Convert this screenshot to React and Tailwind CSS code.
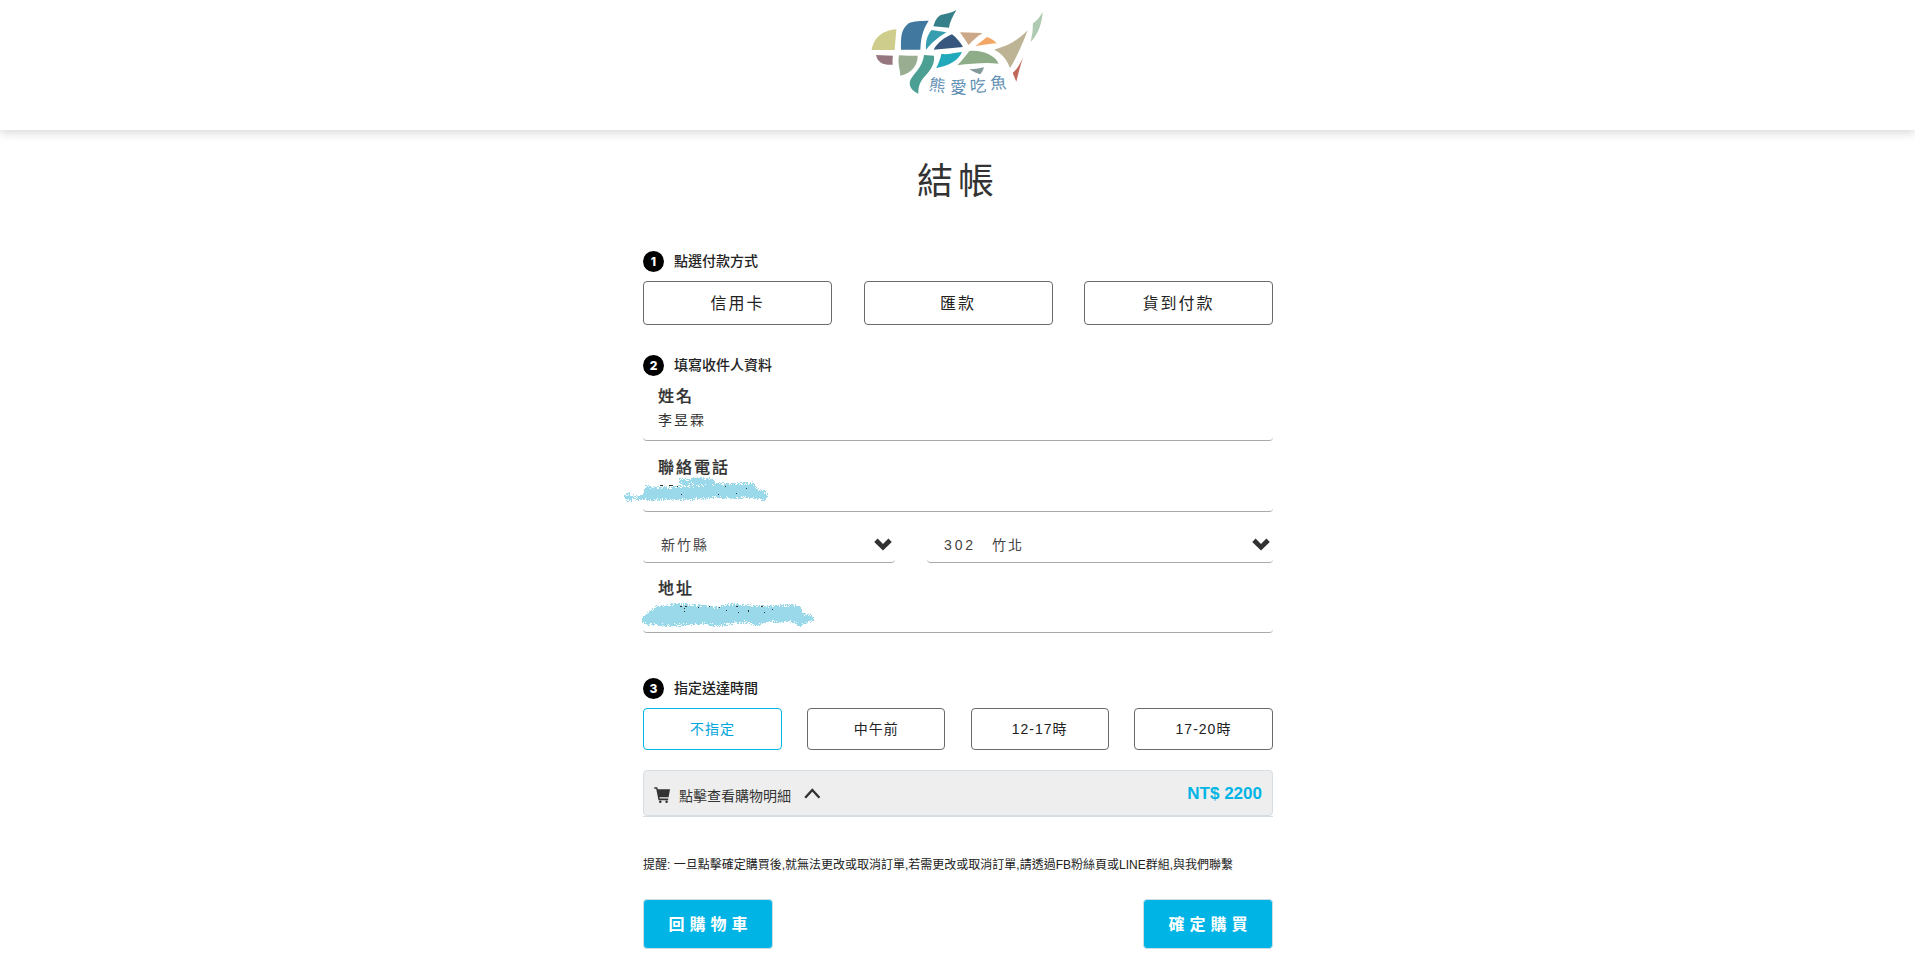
const SANS = "font-['Liberation_Sans','Noto_Sans_CJK_TC',sans-serif]";

const LOGO_SHAPES = [
  ['#cfcd8c', 'M65 150 C70 120 90 92 139 88 C138 108 135 130 134 150 Z'],
  ['#40789f', 'M153 149 C153 110 152 90 176 70 C190 62 215 63 236 62 C224 82 213 100 211 149 Z'],
  ['#35808a', 'M250 79 C256 62 260 52 272 45 C290 41 306 38 319 30 C308 50 299 66 297 83 Z'],
  ['#369eaf', 'M228 150 C226 125 232 104 245 90 L289 97 C268 110 244 128 228 150 Z'],
  ['#38577f', 'M251 149 C262 128 284 112 306 103 C320 114 331 127 339 141 Z'],
  ['#cba888', 'M330 97 L398 99 C380 110 368 122 356 135 Z'],
  ['#f3a665', 'M376 138 C388 129 400 120 411 111 C424 115 434 123 440 130 C418 132 396 135 376 138 Z'],
  ['#bdb496', 'M432 149 C472 138 506 120 533 91 C519 130 501 168 480 205 C472 180 456 160 432 149 Z'],
  ['#aecbb1', 'M578 36 C576 70 565 102 542 126 C545 108 548 97 548 88 C549 78 548 74 549 70 C562 62 571 48 578 36 Z'],
  ['#c06a59', 'M519 174 C511 196 505 220 499 245 L488 219 C502 208 510 190 519 174 Z'],
  ['#967780', 'M78 165 L129 167 C127 176 128 186 128 194 C104 196 83 190 78 165 Z'],
  ['#99ae91', 'M147 166 C166 168 184 167 203 167 C203 194 188 218 151 227 C150 206 142 190 147 166 Z'],
  ['#4ca093', 'M222 165 L252 167 C255 198 236 215 220 234 C206 252 205 266 205 281 C184 272 175 256 181 240 C192 219 218 202 222 165 Z'],
  ['#22a9bb', 'M274 162 C295 164 315 158 336 156 C325 181 297 198 259 204 C266 190 271 177 274 162 Z'],
  ['#8fac88', 'M322 196 C336 181 346 168 358 153 C395 149 435 165 446 191 C404 187 364 191 322 196 Z'],
  ['#83999a', 'M358 208 C373 208 387 205 402 202 C400 211 395 217 391 223 C379 220 369 215 358 208 Z'],
];

const LOGO_TEXT = [
  ['熊', 262, 256, 8],
  ['愛', 325, 261, 0],
  ['吃', 384, 258, -4],
  ['魚', 445, 249, -4],
];

function Logo() {
  return (
    <svg width="180" height="100" viewBox="54 0 540 300" className="block">
      {LOGO_SHAPES.map(([fill, d]) => (
        <path key={d} fill={fill} d={d} />
      ))}
      {LOGO_TEXT.map(([ch, x, y, r]) => (
        <text
          key={ch}
          x={x}
          y={y + 17}
          fontSize="49"
          textAnchor="middle"
          fill="#5f8fb3"
          transform={`rotate(${r} ${x} ${y})`}
          className="font-['Noto_Sans_CJK_TC',sans-serif]"
        >
          {ch}
        </text>
      ))}
    </svg>
  );
}

// Spray-brush stroke: solid inside the outline, speckled along its edge.
function sprayPath(top, bottom, width, height, seed) {
  let s = seed;
  const rand = () => {
    s = (s * 1664525 + 1013904223) % 4294967296;
    return s / 4294967296;
  };
  const at = (pts, x) => {
    for (let i = 1; i < pts.length; i++) {
      if (x <= pts[i][0]) {
        const [x0, y0] = pts[i - 1];
        const [x1, y1] = pts[i];
        return y0 + ((y1 - y0) * (x - x0)) / (x1 - x0 || 1);
      }
    }
    return pts[pts.length - 1][1];
  };
  let d = '';
  for (let y = 0; y < height; y++) {
    for (let x = 0; x < width; x++) {
      const depth = Math.min(y - at(top, x), at(bottom, x) - y) + 1;
      if (depth < 0) continue;
      if (rand() < 0.35 + depth * 0.2) d += `M${x} ${y}h1v1h-1z`;
    }
  }
  return d;
}

// Offsets are in pixels within each stroke's own box.
const PHONE = sprayPath(
  [[0, 19], [2, 17], [5, 16], [9, 18], [13, 19], [18, 17], [21, 9], [26, 9], [40, 10], [53, 9], [90, 7], [92, 6], [110, 6], [128, 5], [133, 11], [140, 14], [143, 17]],
  [[0, 20], [3, 23], [7, 23], [10, 21], [14, 22], [19, 22], [27, 23], [44, 22], [60, 22], [72, 22], [90, 20], [110, 21], [123, 20], [136, 22], [141, 22], [143, 18]],
  144, 25, 7,
);
const PHONE_TOP = sprayPath(
  [[0, 2], [14, 1], [19, 0], [31, 1], [35, 3]],
  [[0, 7], [14, 7], [28, 9], [35, 9]],
  36, 10, 3,
);
const ADDRESS = sprayPath(
  [[0, 14], [5, 10], [10, 6], [14, 3], [24, 2], [34, 0], [46, 1], [60, 2], [72, 4], [86, 1], [100, 1], [118, 3], [138, 2], [150, 1], [158, 3], [160, 10], [168, 12], [172, 15]],
  [[0, 18], [6, 21], [20, 22], [40, 22], [60, 20], [76, 23], [90, 20], [104, 19], [114, 22], [124, 19], [150, 18], [157, 23], [162, 20], [170, 18], [172, 15]],
  172, 25, 19,
);

const PHONE_INK = 'M36 8h3v1h-3z M45 8h4v1h-4z M53 9h1v1h-1z M101 9h1v1h-1z M57 17h1v1h-1z M94 17h1v1h-1z M112 16h1v1h-1z M122 11h1v1h-1z';
const ADDRESS_INK = 'M38 3h2v1h-2z M43 3h2v1h-2z M42 5h1v1h-1z M42 8h1v1h-1z M56 4h1v1h-1z M67 3h1v1h-1z M77 4h1v1h-1z M84 7h1v1h-1z M94 3h2v1h-2z M96 9h1v1h-1z M106 7h1v2h-1z M119 3h2v1h-2z M122 9h1v1h-1z M130 6h1v1h-1z';

function Spray({ d, top, ink, className, width }) {
  return (
    <svg width={width} height="25" shapeRendering="crispEdges" className={`absolute ${className}`}>
      <path d={d} fill="#99d9ea" />
      {top && <path d={top} fill="#99d9ea" transform="translate(55 0)" />}
      <path d={ink} fill="#333" />
    </svg>
  );
}

function Step({ n, children, className = '' }) {
  return (
    <div className={`flex h-[21px] items-center gap-[10px] text-[14px] font-medium text-[#222] ${className}`}>
      <span className="flex size-[21px] items-center justify-center rounded-full bg-black font-['Inter',sans-serif] text-[12px] leading-none font-extrabold text-white">
        {n}
      </span>
      <span className="leading-[21px]">{children}</span>
    </div>
  );
}

function Field({ label, children, className = '' }) {
  return (
    <div className={`relative h-[57px] border-b border-[#aaa] pt-px pl-[15px] tracking-[2px] text-[#333] ${className}`}>
      <div className="text-[16px] leading-[24px] font-medium [-webkit-text-stroke:0.2px_#222]">{label}</div>
      <div className="h-[22px] text-[14px] leading-[22px]">{children}</div>
    </div>
  );
}

function SelectBox({ children, className = '' }) {
  return (
    <div className={`flex h-[38px] items-center justify-between rounded-b-[4px] border-b border-[#aaa] pr-[3px] text-[14px] tracking-[2px] text-[#444] ${className}`}>
      <span className="mt-[4px] whitespace-pre">{children}</span>
      <svg width="18" height="13" viewBox="0 0 18 13" className="mt-[2px] block">
        <path d="M0.2 3.9 L3.6 0.6 L9 5.9 L14.4 0.6 L17.8 3.9 L9 12.5 Z" fill="#333" />
      </svg>
    </div>
  );
}

const PAYMENTS = ['信用卡', '匯款', '貨到付款'];
const TIMES = [
  ['不指定', 'w-[139px] border-[#00b5e5] text-[#00a5dc]'],
  ['中午前', 'w-[138px] border-[#6a6a6a] text-[#222]'],
  ['12-17時', 'w-[138px] border-[#6a6a6a] text-[#222]'],
  ['17-20時', 'w-[139px] border-[#6a6a6a] text-[#222]'],
];

export default function App() {
  return (
    <div className={`h-[958px] w-full overflow-hidden bg-white ${SANS}`}>
      <header className="flex h-[130px] justify-center bg-white shadow-[0_2px_10px_rgba(0,0,0,0.18)]">
        <Logo />
      </header>

      <main className="mx-auto w-[631px] pl-px">
        <h1 className="pt-[26px] text-center text-[36px] leading-[52px] tracking-[5px] text-[#333]">結帳</h1>

        <Step n={1} className="mt-[43px]">點選付款方式</Step>
        <div className="mt-[9px] flex justify-between">
          {PAYMENTS.map((p) => (
            <button key={p} className="h-[44px] w-[189px] rounded-[4px] border border-[#6a6a6a] pt-[2px] text-[16px] tracking-[2px] text-[#222]">
              {p}
            </button>
          ))}
        </div>

        <Step n={2} className="mt-[30px]">填寫收件人資料</Step>
        <Field label="姓名" className="mt-[8px] rounded-b-[4px]">李昱霖</Field>
        <Field label="聯絡電話" className="mt-[14px] rounded-b-[4px]">
          <Spray d={PHONE} top={PHONE_TOP} ink={PHONE_INK} width="145" className="-left-[19px] top-[22px]" />
        </Field>
        <div className="mt-[13px] flex justify-between">
          <SelectBox className="w-[252px] pl-[18px]">新竹縣</SelectBox>
          <SelectBox className="w-[346px] pl-[17px]">
            <span className="tracking-[2.9px]">302</span>
            {'\u3000竹北'}
          </SelectBox>
        </div>
        <Field label="地址" className="mt-[13px] rounded-b-[4px]">
          <Spray d={ADDRESS} ink={ADDRESS_INK} width="174" className="-left-px top-[27px]" />
        </Field>

        <Step n={3} className="mt-[45px]">指定送達時間</Step>
        <div className="mt-[9px] flex justify-between">
          {TIMES.map(([t, look]) => (
            <button key={t} className={`h-[42px] rounded-[4px] border text-[14px] tracking-[1px] ${look}`}>
              {t}
            </button>
          ))}
        </div>

        <div className="mt-[20px] border-b border-[#d6dee4]">
          <div className="flex h-[46px] items-center rounded-[4px] border border-[#d6dee4] bg-[#eee] pr-[10px] pl-[10px]">
            <svg width="17" height="17" viewBox="0 0 17 17" fill="#333" className="mt-[4px] block">
              <path d="M0.3 0.2 H3.2 L3.9 2.2 H16 L14.6 10.2 H5.4 L5.7 11.6 H14.2 V13.2 H4.5 L2.2 1.8 H0.3 Z" />
              <circle cx="6.3" cy="14.8" r="1.3" />
              <circle cx="12.6" cy="14.8" r="1.3" />
            </svg>
            <span className="mt-[6px] ml-[8px] text-[14px] leading-[20px] text-[#333]">點擊查看購物明細</span>
            <svg width="17" height="11" viewBox="0 0 17 11" className="mt-px ml-[13px] block">
              <path d="M1.2 9.8 L8.3 2 L15.4 9.8" fill="none" stroke="#333" strokeWidth="2.4" />
            </svg>
            <span className="mt-px ml-auto text-[17px] font-bold text-[#00b5e5]">NT$ 2200</span>
          </div>
        </div>

        <p className="mt-[38px] text-[12px] leading-[20px] whitespace-nowrap text-[#222]">
          提醒: 一旦點擊確定購買後,就無法更改或取消訂單,若需更改或取消訂單,請透過FB粉絲頁或LINE群組,與我們聯繫
        </p>

        <div className="mt-[24px] flex justify-between">
          {['回購物車', '確定購買'].map((t) => (
            <button key={t} className="h-[50px] w-[130px] rounded-[4px] border border-[#ccdde5] bg-[#00b5e5] pt-px pl-[5px] text-[16px] font-bold tracking-[5px] text-white">
              {t}
            </button>
          ))}
        </div>
      </main>
    </div>
  );
}
